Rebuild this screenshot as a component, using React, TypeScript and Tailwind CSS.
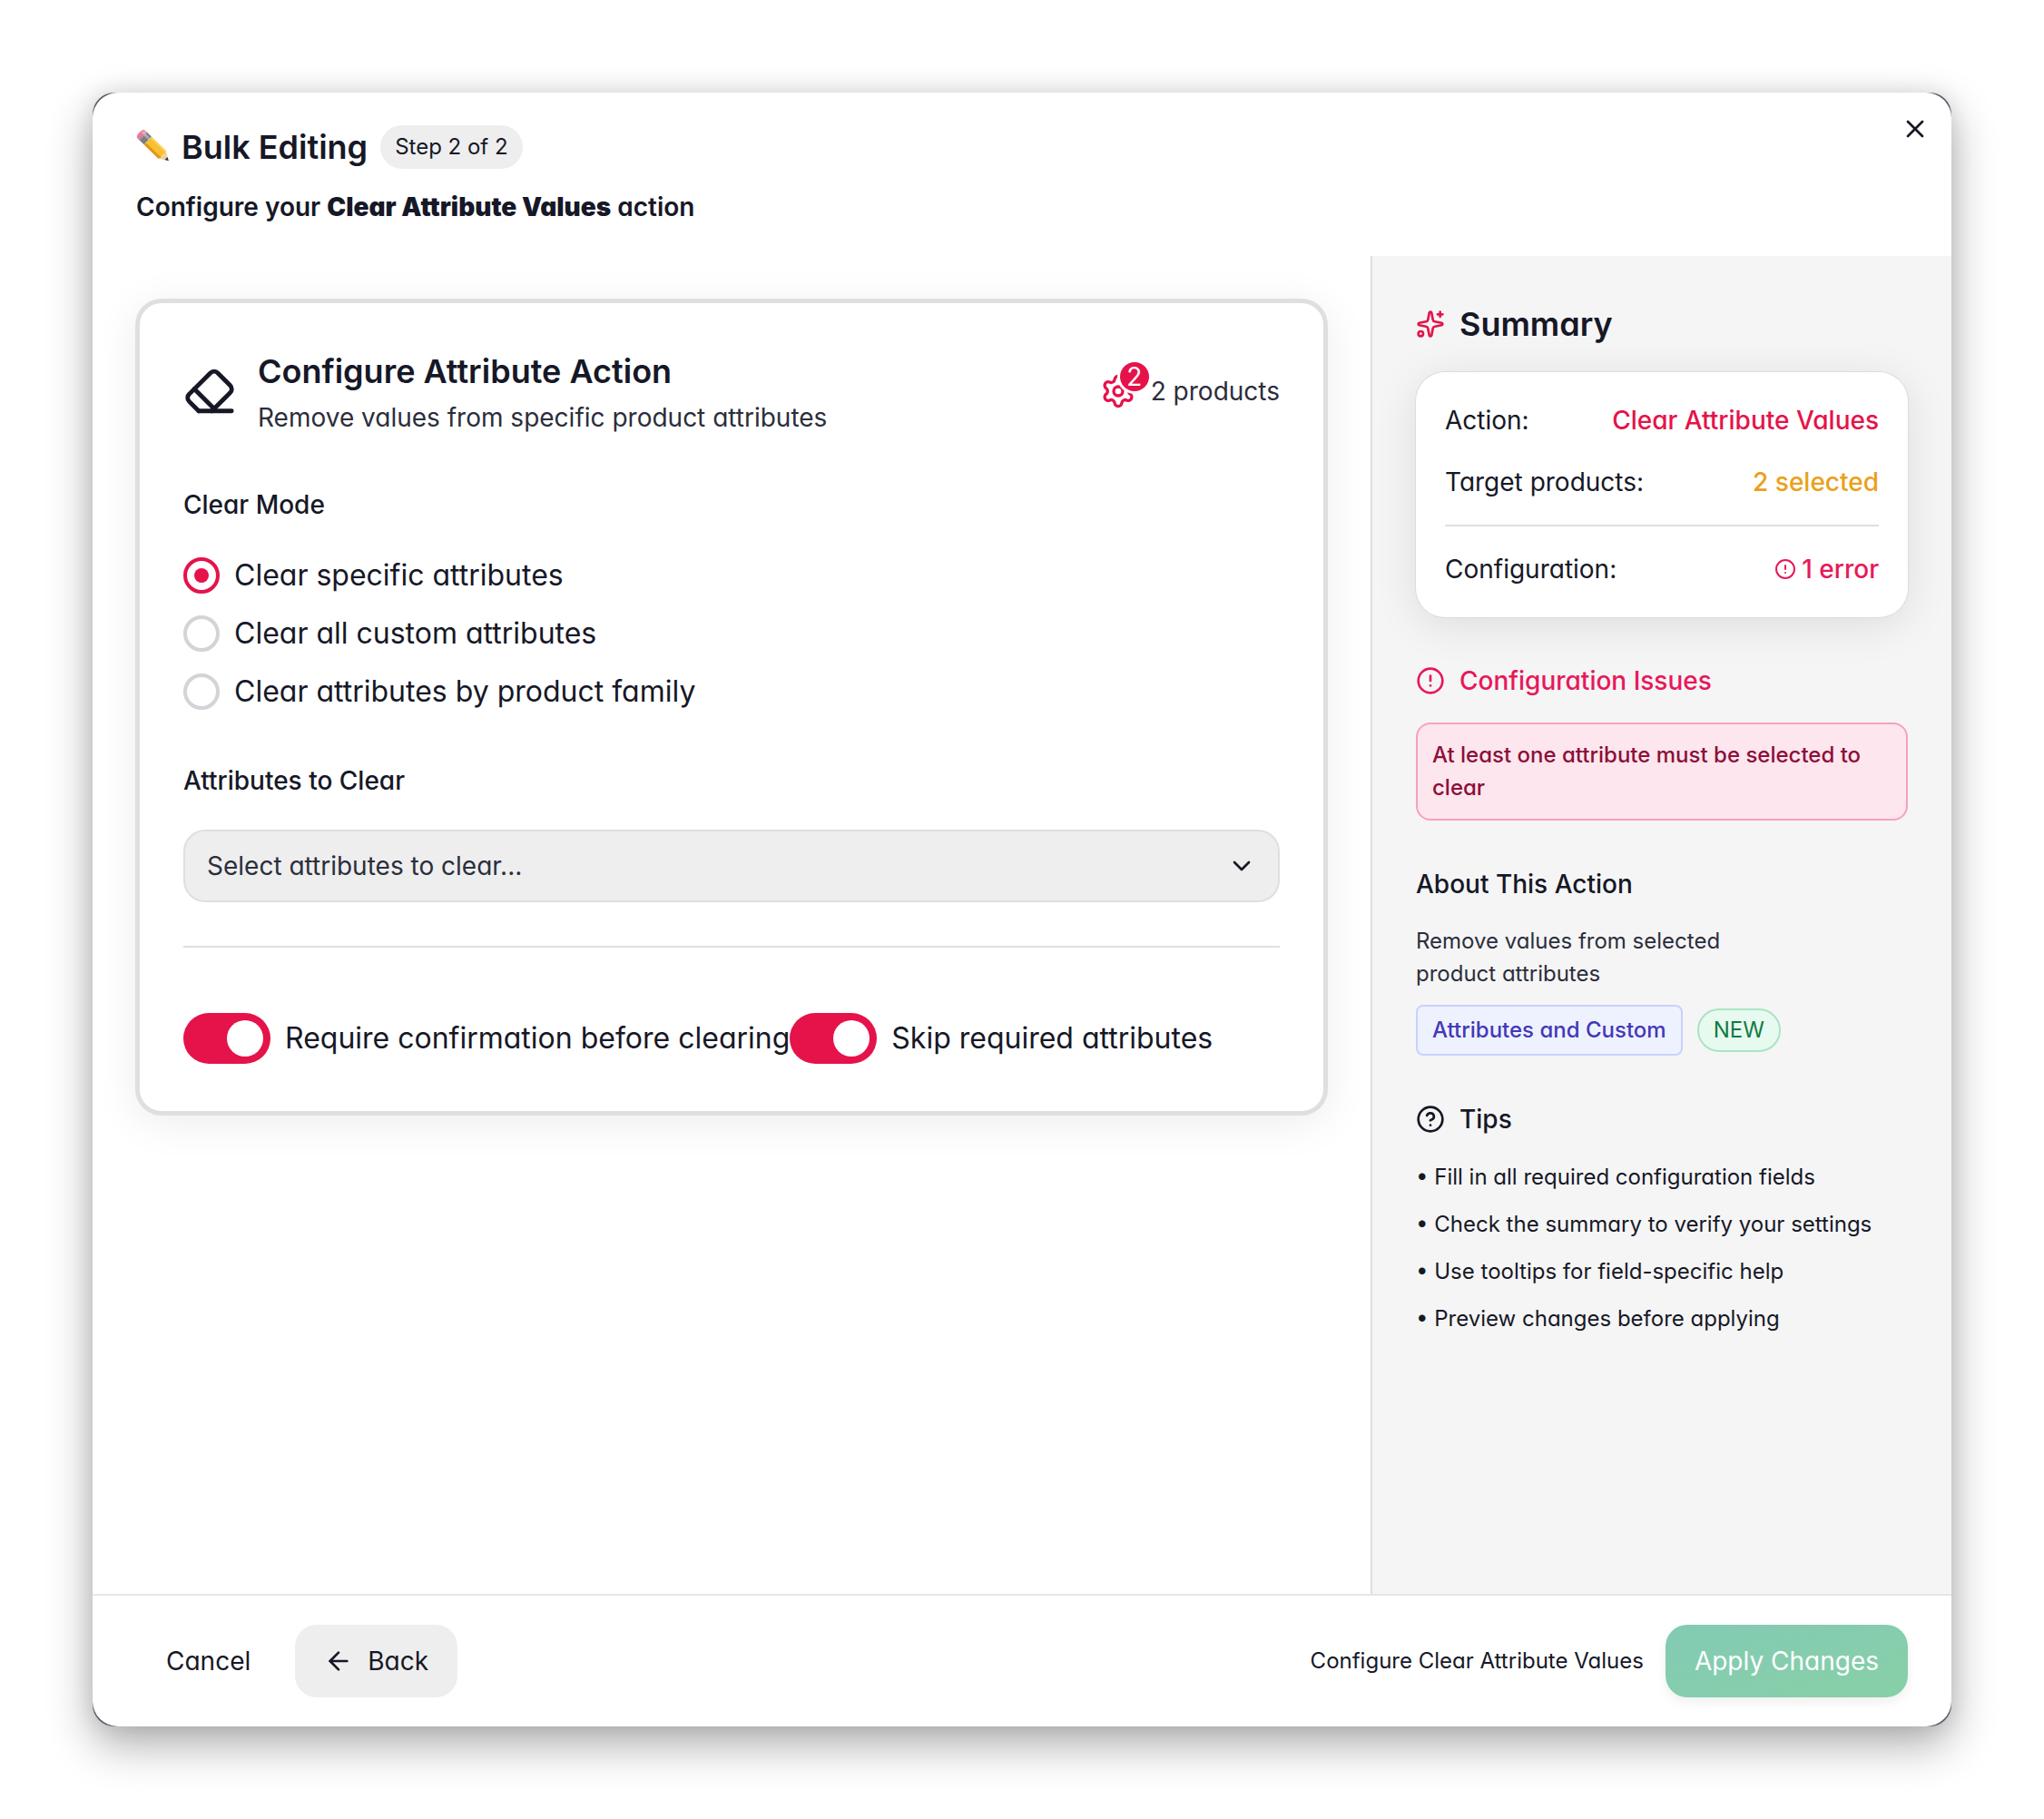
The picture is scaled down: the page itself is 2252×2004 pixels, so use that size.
import { useState, type ReactNode } from 'react'
import { ArrowLeft, ChevronDown, CircleAlert, CircleQuestionMark, Settings, Sparkles, X } from 'lucide-react'

const clearModes = ['Clear specific attributes', 'Clear all custom attributes', 'Clear attributes by product family']

const tips = [
  'Fill in all required configuration fields',
  'Check the summary to verify your settings',
  'Use tooltips for field-specific help',
  'Preview changes before applying',
]

export default function App() {
  return (
    <div className="min-h-screen bg-white p-[102px] font-['Inter',sans-serif] text-[28px] leading-[40px] text-[#161827] [font-feature-settings:'cv11']">
      <div className="rounded-[24px] bg-[#5c5c68] shadow-[0_20px_50px_rgba(0,0,0,0.32),0_0_24px_rgba(0,0,0,0.1)]">
        <div role="dialog" aria-labelledby="dialog-title" className="relative flex min-h-[calc(100vh-204px)] flex-col overflow-hidden rounded-[28px] bg-white">
          <DialogHeader />
          <div className="flex flex-1">
            <main className="flex-1 p-12">
              <ConfigCard />
            </main>
            <Sidebar />
          </div>
          <DialogFooter />
        </div>
      </div>
    </div>
  )
}

function DialogHeader() {
  return (
    <header className="px-12 pt-9 pb-[34px]">
      <div className="flex h-12 items-center">
        <PencilIcon />
        <h1 id="dialog-title" className="ml-3.5 text-[36px] font-semibold">Bulk Editing</h1>
        <span className="ml-3.5 rounded-full bg-[#eeeeee] px-4 text-2xl leading-[48px]">Step 2 of 2</span>
      </div>
      <p className="mt-[22px] font-semibold">
        Configure your <strong className="font-black">Clear Attribute Values</strong> action
      </p>
      <button type="button" aria-label="Close" className="absolute top-6 right-6">
        <X className="size-8" />
      </button>
    </header>
  )
}

function ConfigCard() {
  const [mode, setMode] = useState(0)

  return (
    <section className="rounded-[28px] border-4 border-[#dfdfdf] bg-white p-12 ring-1 ring-[#dfdfdf] shadow-[0_8px_48px_rgba(0,0,0,0.08)]">
      <div className="flex items-center">
        <EraserIcon />
        <div className="ml-6 flex-1">
          <h2 className="text-[36px] leading-[54px] font-semibold">Configure Attribute Action</h2>
          <p className="mt-1 text-[#2b2e3b]">Remove values from specific product attributes</p>
        </div>
        <div className="flex items-center text-[#2b2e3b]">
          <span className="relative mr-4 text-[#e5134a]">
            <Settings className="size-10" />
            <span className="absolute -top-3 -right-3.5 size-8 rounded-full bg-[#e5134a] text-center text-[28px] leading-8 text-white shadow-[0_0_0_3px_#fff]">2</span>
          </span>
          2 products
        </div>
      </div>

      <fieldset className="mt-14">
        <legend className="font-medium">Clear Mode</legend>
        <div className="mt-[34px] flex flex-col gap-4">
          {clearModes.map((label, index) => (
            <label key={label} className="flex items-center gap-4 text-[32px] leading-[48px]">
              <input
                type="radio"
                name="clear-mode"
                checked={mode === index}
                onChange={() => setMode(index)}
                className="grid size-10 appearance-none place-items-center rounded-full border-4 border-[#d3d3d8] before:size-4 before:rounded-full checked:border-[#e5134a] checked:before:bg-[#e5134a]"
              />
              {label}
            </label>
          ))}
        </div>
      </fieldset>

      <label htmlFor="attributes" className="mt-[54px] block font-medium">Attributes to Clear</label>
      <div className="relative mt-[34px]">
        <select
          id="attributes"
          className="h-20 w-full appearance-none rounded-[24px] border-2 border-[#dfdfdf] bg-[#eeeeee] px-6 text-[#2b2e3b]"
        >
          <option>Select attributes to clear...</option>
        </select>
        <ChevronDown className="pointer-events-none absolute top-6 right-[26px] size-8" />
      </div>

      <hr className="mt-12 border-t-2 border-[#dfdfdf]" />

      <div className="mt-[68px] flex items-center text-[32px] leading-[64px]">
        <Toggle label="Require confirmation before clearing" />
        <Toggle label="Skip required attributes" />
      </div>
    </section>
  )
}

function Toggle({ label }: { label: string }) {
  return (
    <label className="flex items-center gap-4">
      <input
        type="checkbox"
        role="switch"
        defaultChecked
        className="flex h-14 w-24 shrink-0 appearance-none items-center rounded-full bg-[#d3d3d8] px-2 before:size-10 before:rounded-full before:bg-white checked:justify-end checked:bg-[#e5134a]"
      />
      {label}
    </label>
  )
}

function Sidebar() {
  return (
    <aside className="w-[640px] border-l-2 border-[#dfdfdf] bg-[#f5f5f5] px-12 py-12">
      <h2 className="flex items-center gap-4 text-[36px] leading-[54px] font-semibold">
        <Sparkles className="size-8 text-[#e5134a]" />
        Summary
      </h2>

      <dl className="mt-[26px] rounded-[32px] bg-white p-8 leading-[42px] ring-1 ring-[#dcdcdc] shadow-[0_8px_48px_rgba(0,0,0,0.10)]">
        <SummaryRow label="Action:">
          <span className="text-[#e5134a]">Clear Attribute Values</span>
        </SummaryRow>
        <div className="my-[26px]">
          <SummaryRow label="Target products:">
            <span className="text-[#eba01a]">2 selected</span>
          </SummaryRow>
        </div>
        <div className="border-t-2 border-[#dfdfdf] pt-[26px]">
          <SummaryRow label="Configuration:">
            <span className="flex items-center gap-1.5 text-[#e8185a]">
              <CircleAlert className="size-6" />
              1 error
            </span>
          </SummaryRow>
        </div>
      </dl>

      <h3 className="mt-[50px] flex items-center gap-4 font-medium text-[#e8185a]">
        <CircleAlert className="size-8" />
        Configuration Issues
      </h3>
      <p role="alert" className="mt-[26px] rounded-2xl border-2 border-[#f7a1bd] bg-[#fee6ee] p-4 text-2xl leading-9 font-medium text-[#8c0f38]">
        At least one attribute must be selected to clear
      </p>

      <h3 className="mt-[50px] font-medium">About This Action</h3>
      <p className="mt-[25px] max-w-[400px] text-2xl leading-9 text-[#2b2e3b]">Remove values from selected product attributes</p>
      <div className="mt-4 flex items-center gap-4 text-2xl">
        <span className="rounded-lg border-2 border-[#c8d2fc] bg-[#eef2ff] px-4 leading-[52px] font-medium text-[#4438b8]">Attributes and Custom</span>
        <span className="rounded-full border-2 border-[#a9e4c4] bg-[#e7faf0] px-4 leading-[44px] text-[#137a42]">NEW</span>
      </div>

      <h3 className="mt-[50px] flex items-center gap-4 font-medium">
        <CircleQuestionMark className="size-8" />
        Tips
      </h3>
      <ul className="mt-[26px] flex flex-col gap-4 text-2xl leading-9">
        {tips.map((tip) => (
          <li key={tip}>• {tip}</li>
        ))}
      </ul>
    </aside>
  )
}

function SummaryRow({ label, children }: { label: string; children: ReactNode }) {
  return (
    <div className="flex items-center justify-between">
      <dt>{label}</dt>
      <dd className="font-medium">{children}</dd>
    </div>
  )
}

function DialogFooter() {
  return (
    <footer className="flex items-center border-t-2 border-[#e6e6e6] px-12 py-8">
      <button type="button" className="h-20 px-[33px]">Cancel</button>
      <button type="button" className="ml-4 flex h-20 items-center gap-4 rounded-[24px] bg-[#eeeeee] px-8">
        <ArrowLeft className="size-8" />
        Back
      </button>
      <span className="ml-auto text-2xl">Configure Clear Attribute Values</span>
      <button
        type="button"
        className="ml-6 h-20 rounded-[24px] bg-gradient-to-br from-[#83cab4] to-[#88d0a7] px-8 text-white shadow-[0_6px_12px_rgba(0,0,0,0.06)]"
      >
        Apply Changes
      </button>
    </footer>
  )
}

function EraserIcon() {
  return (
    <svg viewBox="0 0 24 24" fill="none" stroke="currentColor" strokeWidth="2" strokeLinecap="round" strokeLinejoin="round" className="size-[58px]">
      <path d="m7 21-4.3-4.3c-1-1-1-2.5 0-3.4l9.6-9.6c1-1 2.5-1 3.4 0l5.6 5.6c1 1 1 2.5 0 3.4L13 21" />
      <path d="M22 21H7" />
      <path d="m5 11 9 9" />
    </svg>
  )
}

function PencilIcon() {
  return (
    <svg viewBox="0 0 36 36" className="size-9 overflow-visible">
      <g transform="translate(3.500 2) rotate(44)">
        <path d="M7 -6H3Q0 -6 0 0T3 6H7Z" fill="#dd7f95" />
        <path d="M7 -6H3.500Q1.500 -5 1 -1.500H7Z" fill="#f0a3b4" />
        <rect x="6" y="-6" width="7" height="12" fill="#7f848b" />
        <rect x="6" y="-4" width="7" height="3" fill="#b4b9be" />
        <path d="M8.500 -6V6M11 -6V6" stroke="#5f646b" strokeWidth=".6" />
        <path d="M13 -6H35L36.500 -3 35.500 0 36.500 3 35 6H13Z" fill="#f8bf32" />
        <path d="M13 -6H35L36 -4H13Z" fill="#fbd35c" />
        <path d="M13 3H36.500L35 6H13Z" fill="#dd961f" />
        <path d="M35 -6 44.500 0 35 6 36.500 3 35.500 0 36.500 -3Z" fill="#efd2a3" />
        <path d="M41 -2.200 45 0 41 2.200Z" fill="#35353c" />
      </g>
    </svg>
  )
}
